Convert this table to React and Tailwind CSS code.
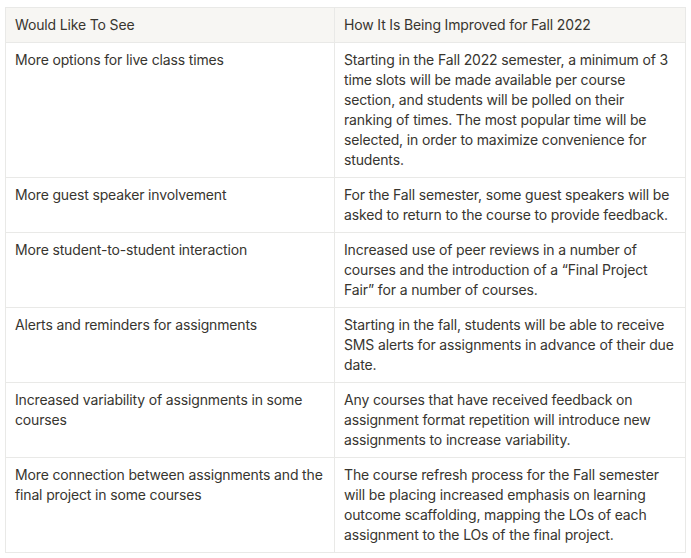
export default function App() {
  const rows = [
    ["More options for live class times", "Starting in the Fall 2022 semester, a minimum of 3 time slots will be made available per course section, and students will be polled on their ranking of times. The most popular time will be selected, in order to maximize convenience for students."],
    ["More guest speaker involvement", "For the Fall semester, some guest speakers will be asked to return to the course to provide feedback."],
    ["More student-to-student interaction", "Increased use of peer reviews in a number of courses and the introduction of a \u201cFinal Project Fair\u201d for a number of courses."],
    ["Alerts and reminders for assignments", "Starting in the fall, students will be able to receive SMS alerts for assignments in advance of their due date."],
    ["Increased variability of assignments in some courses", "Any courses that have received feedback on assignment format repetition will introduce new assignments to increase variability."],
    ["More connection between assignments and the final project in some courses", "The course refresh process for the Fall semester will be placing increased emphasis on learning outcome scaffolding, mapping the LOs of each assignment to the LOs of the final project."],
  ];
  return (
    <div className="w-[691px] h-[558px] bg-white pt-[7px] pl-[5px] font-['Inter',sans-serif] text-[14px] leading-[20px] tracking-[-0.15px] text-[#37352f]">
      <table className="border-collapse w-[680px] table-fixed">
        <colgroup>
          <col className="w-[329px]" />
          <col className="w-[351px]" />
        </colgroup>
        <thead>
          <tr className="bg-[#f7f6f3]">
            <th className="border border-[#e9e9e7] px-[9px] py-[7px] text-left font-normal align-top">Would Like To See</th>
            <th className="border border-[#e9e9e7] px-[9px] py-[7px] text-left font-normal align-top">How It Is Being Improved for Fall 2022</th>
          </tr>
        </thead>
        <tbody>
          {rows.map(([a, b], i) => (
            <tr key={i}>
              <td className="border border-[#e9e9e7] px-[9px] py-[7px] align-top">{a}</td>
              <td className="border border-[#e9e9e7] px-[9px] py-[7px] align-top">{b}</td>
            </tr>
          ))}
        </tbody>
      </table>
    </div>
  );
}
